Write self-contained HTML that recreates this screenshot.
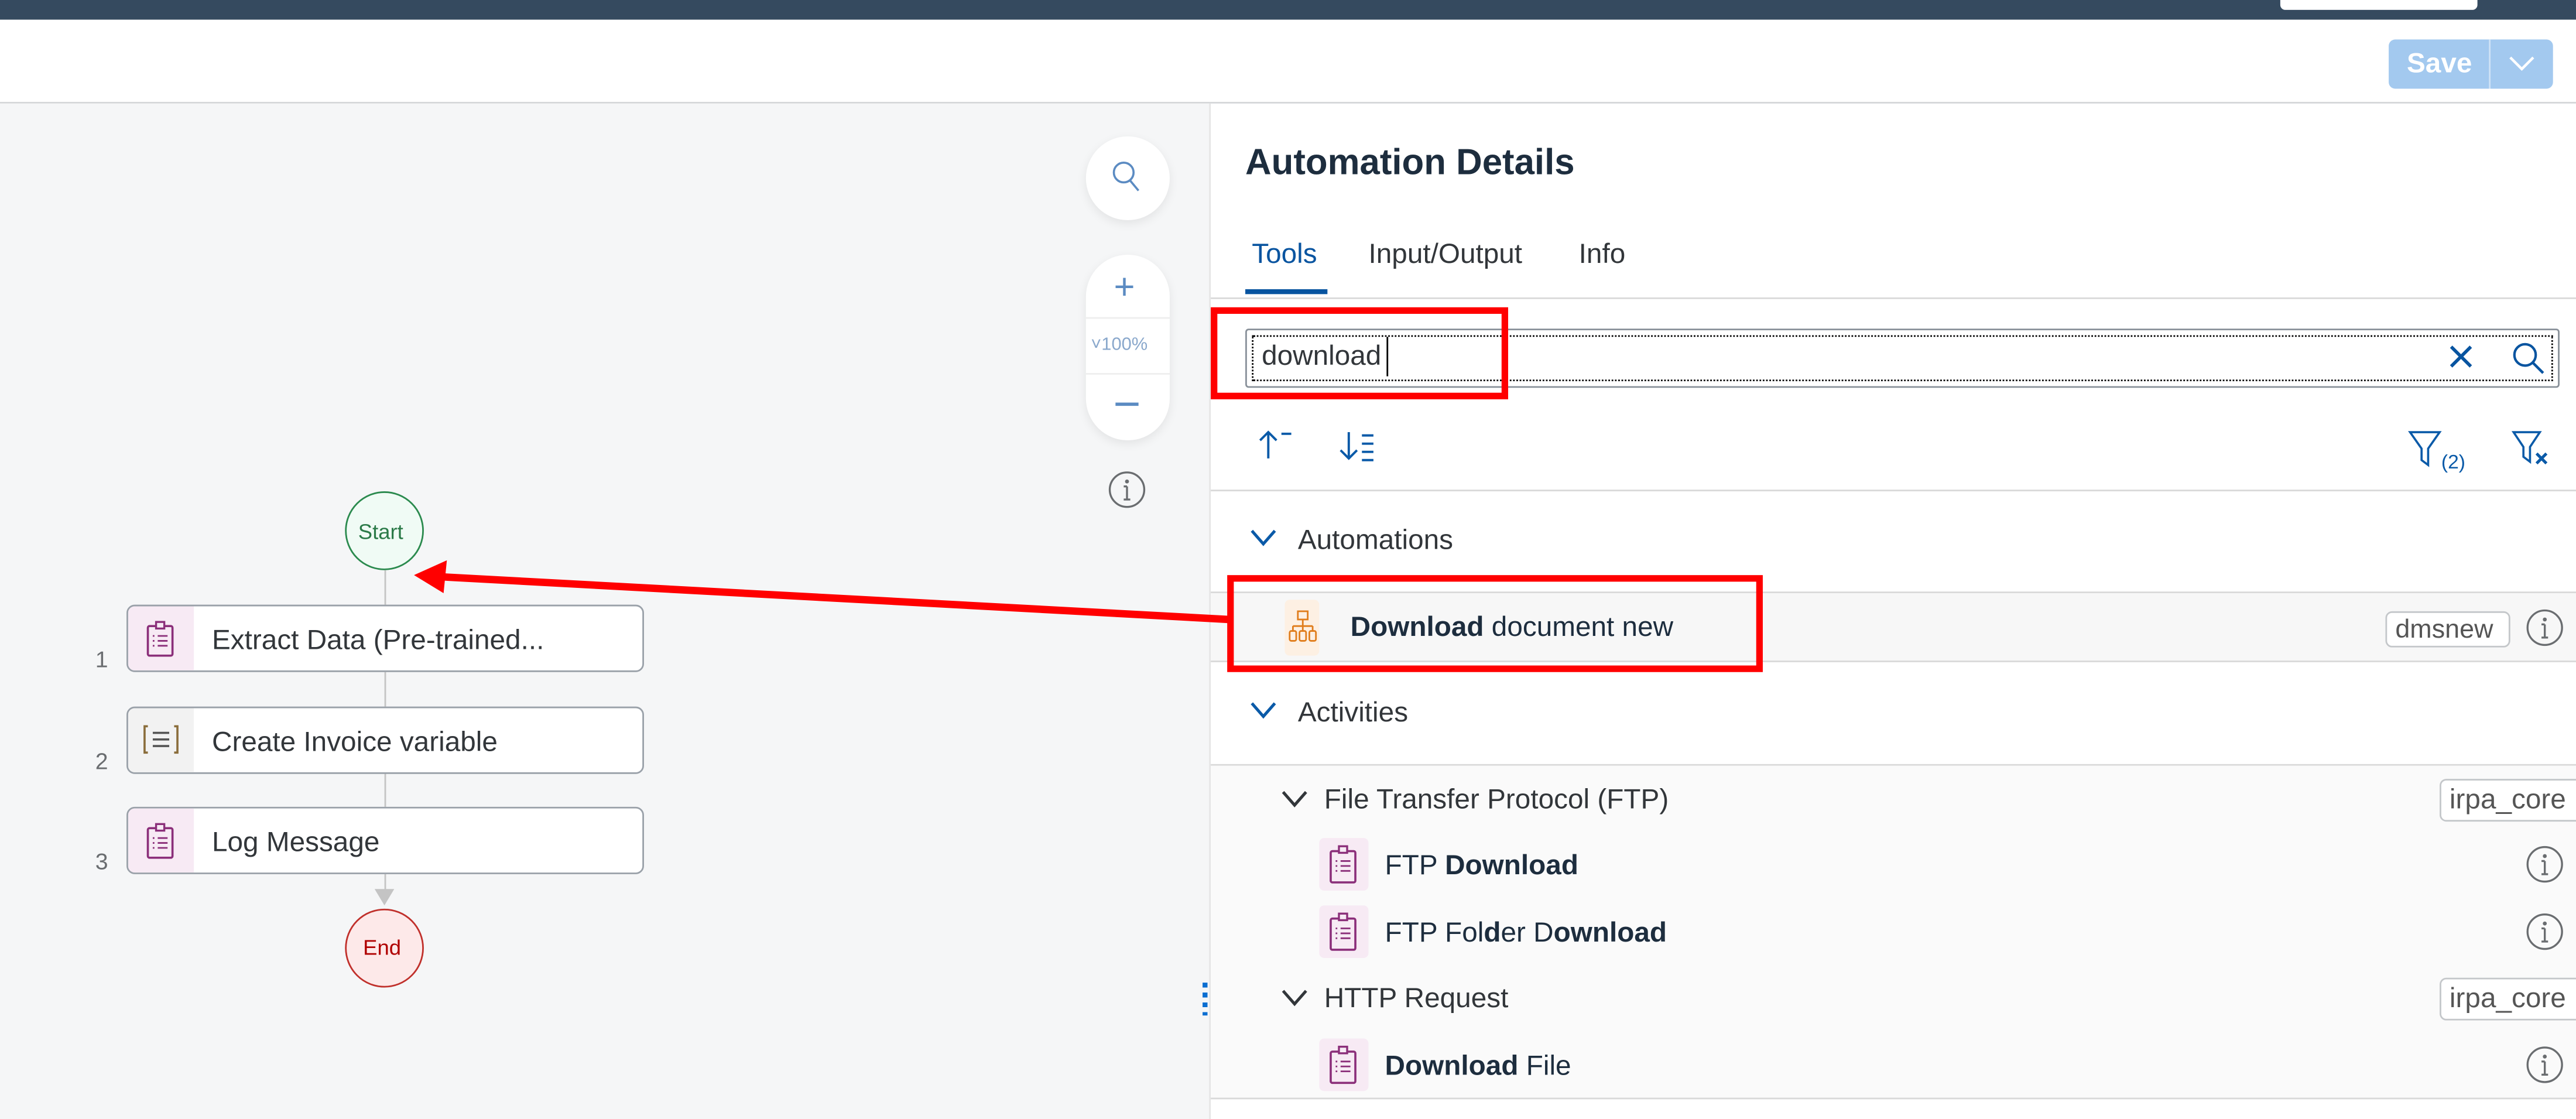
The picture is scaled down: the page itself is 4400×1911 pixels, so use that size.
<!DOCTYPE html>
<html><head><meta charset="utf-8"><style>
html,body{margin:0;padding:0;width:4400px;height:1911px;overflow:hidden;background:#fff}
#w{position:absolute;left:0;top:0;width:1568px;height:681px;transform:scale(2.80612,2.8062);transform-origin:0 0;font-family:"Liberation Sans",Arial,sans-serif;color:#32363a}
.a{position:absolute}
.t{position:absolute;white-space:nowrap;line-height:1}
.hr{position:absolute;height:1px;background:#d9d9d9}
.box{position:absolute;left:77px;width:313px;height:39px;border:1.5px solid #9aa1a9;border-radius:5px;background:#fff;overflow:hidden}
.box .ic{position:absolute;left:0;top:0;width:40px;height:100%;background:#f7eaf4}
.box .tx{position:absolute;left:51px;top:11px;font-size:17px;color:#32363a;white-space:nowrap}
.num{position:absolute;left:58px;font-size:14px;color:#6a6d70}
.tag{position:absolute;height:22px;border:1px solid #c4c7ca;border-radius:4px;background:#fff;font-size:16px;color:#555;line-height:22px;padding:0 5px;box-sizing:border-box}
.pk{position:absolute;width:30px;height:32px;background:#f7eaf4;border-radius:3px}
</style></head><body><div id="w">
<!-- top bar -->
<div class="a" style="left:0;top:0;width:1568px;height:12px;background:#354a5f"></div>
<div class="a" style="left:1388px;top:0;width:120px;height:6px;background:#fff;border-radius:0 0 3px 3px"></div>
<div class="a" style="left:0;top:12px;width:1568px;height:50px;background:#fff"></div>
<div class="hr" style="left:0;top:62px;width:1568px;background:#d5d7d9"></div>
<div class="a" style="left:1454px;top:24px;width:100px;height:30px;background:#a3c9ef;border-radius:4px"></div>
<div class="a" style="left:1515px;top:24px;width:1px;height:30px;background:#cfe2f6"></div>
<div class="t" style="left:1465px;top:30px;font-size:17px;font-weight:bold;color:#fff">Save</div>
<svg class="a" style="left:1525px;top:32px" width="20" height="14"><path d="M3 3 L10 10 L17 3" stroke="#fff" stroke-width="1.6" fill="none"/></svg>
<!-- canvas -->
<div class="a" style="left:0;top:63px;width:736px;height:618px;background:#f5f6f7"></div>
<div class="a" style="left:736px;top:63px;width:1px;height:618px;background:#e5e5e5"></div>
<div class="a" style="left:661px;top:83px;width:51px;height:51px;border-radius:50%;background:#fff;box-shadow:0 2px 6px rgba(0,0,0,.08)"></div>
<svg class="a" style="left:676px;top:97px" width="20" height="22"><circle cx="8" cy="8" r="6" stroke="#5b8bc2" stroke-width="1.3" fill="none"/><path d="M12 13 L17 19" stroke="#5b8bc2" stroke-width="1.3"/></svg>
<div class="a" style="left:661px;top:155px;width:51px;height:113px;border-radius:26px;background:#fff;box-shadow:0 2px 6px rgba(0,0,0,.08)"></div>
<div class="a" style="left:661px;top:193px;width:51px;height:1px;background:#eee"></div>
<div class="a" style="left:661px;top:227px;width:51px;height:1px;background:#eee"></div>
<div class="t" style="left:678px;top:164px;font-size:22px;color:#5b8bc2">+</div>
<div class="t" style="left:664px;top:205px;font-size:11px;color:#8aa8cc">˅100%</div>
<div class="a" style="left:679px;top:245px;width:14px;height:1.5px;background:#5b8bc2"></div>
<svg class="a" style="left:674px;top:286px" width="24" height="24"><circle cx="12" cy="12" r="10.5" stroke="#6a6d70" stroke-width="1.2" fill="none"/><circle cx="12" cy="7" r="1.2" fill="#6a6d70"/><path d="M12 10v8M10 18h4M10 10h2" stroke="#6a6d70" stroke-width="1.2" fill="none"/></svg>
<!-- flow -->
<div class="a" style="left:210px;top:299px;width:46px;height:46px;border:1.5px solid #2b8a4e;border-radius:50%;background:#f0fbf5"></div>
<div class="t" style="left:218px;top:317px;font-size:13px;color:#2b7a48">Start</div>
<div class="a" style="left:234px;top:347px;width:1px;height:21px;background:#c4c4c4"></div>
<div class="a" style="left:234px;top:409px;width:1px;height:21px;background:#c4c4c4"></div>
<div class="a" style="left:234px;top:470px;width:1px;height:21px;background:#c4c4c4"></div>
<div class="a" style="left:234px;top:532px;width:1px;height:10px;background:#c4c4c4"></div>
<svg class="a" style="left:228px;top:541px" width="12" height="12"><path d="M0 0 L12 0 L6 10Z" fill="#c4c4c4"/></svg>
<div class="box" style="top:368px"><div class="ic"></div><div class="tx">Extract Data (Pre-trained...</div></div>
<div class="box" style="top:430px"><div class="ic" style="background:#f2f2f2"></div><div class="tx">Create Invoice variable</div></div>
<div class="box" style="top:491px"><div class="ic"></div><div class="tx">Log Message</div></div>
<svg class="a" style="left:88px;top:377px" width="20" height="24"><rect x="2" y="4" width="15" height="18" rx="1" stroke="#8b2f7a" stroke-width="1.3" fill="none"/><rect x="7" y="1.5" width="5" height="4" stroke="#8b2f7a" stroke-width="1.2" fill="#f7eaf4"/><path d="M5 10h1M8 10h6M5 13h1M8 13h6M5 16h1M8 16h6" stroke="#8b2f7a" stroke-width="1"/></svg>
<svg class="a" style="left:88px;top:500px" width="20" height="24"><rect x="2" y="4" width="15" height="18" rx="1" stroke="#8b2f7a" stroke-width="1.3" fill="none"/><rect x="7" y="1.5" width="5" height="4" stroke="#8b2f7a" stroke-width="1.2" fill="#f7eaf4"/><path d="M5 10h1M8 10h6M5 13h1M8 13h6M5 16h1M8 16h6" stroke="#8b2f7a" stroke-width="1"/></svg>
<svg class="a" style="left:86px;top:440px" width="24" height="20"><path d="M4 2H2v16h2M20 2h2v16h-2" stroke="#8a6d3b" stroke-width="1.3" fill="none"/><path d="M7 6h10M7 10h10M7 14h10" stroke="#555" stroke-width="1.3"/></svg>
<div class="num" style="top:393px">1</div>
<div class="num" style="top:455px">2</div>
<div class="num" style="top:516px">3</div>
<div class="a" style="left:210px;top:553px;width:46px;height:46px;border:1.5px solid #c0302b;border-radius:50%;background:#fde9e9"></div>
<div class="t" style="left:221px;top:570px;font-size:13px;color:#b00000">End</div>
<div class="a" style="left:732px;top:598px;width:3px;height:20px;background:repeating-linear-gradient(#0a6ed1 0 3px,transparent 3px 6px)"></div>
<!-- right panel -->
<div class="t" style="left:758px;top:88px;font-size:22px;font-weight:bold;color:#1d2d3e">Automation Details</div>
<div class="t" style="left:762px;top:146px;font-size:17px;color:#0854a0">Tools</div>
<div class="t" style="left:833px;top:146px;font-size:17px;color:#32363a">Input/Output</div>
<div class="t" style="left:961px;top:146px;font-size:17px;color:#32363a">Info</div>
<div class="a" style="left:758px;top:176px;width:50px;height:3px;background:#0854a0"></div>
<div class="hr" style="left:737px;top:181px;width:831px"></div>
<div class="a" style="left:758px;top:200px;width:800px;height:36px;border:1px solid #89919a;border-radius:2px;box-sizing:border-box;background:#fff"></div>
<div class="a" style="left:762px;top:204px;width:792px;height:28px;border:1px dotted #000;box-sizing:border-box"></div>
<div class="t" style="left:768px;top:208px;font-size:17px;color:#32363a">download</div>
<div class="a" style="left:844px;top:205px;width:1px;height:24px;background:#000"></div>
<svg class="a" style="left:1490px;top:209px" width="16" height="16"><path d="M2 2L14 14M14 2L2 14" stroke="#0854a0" stroke-width="2"/></svg>
<svg class="a" style="left:1528px;top:207px" width="22" height="22"><circle cx="9" cy="9" r="6.5" stroke="#0854a0" stroke-width="1.5" fill="none"/><path d="M14 14l6 6" stroke="#0854a0" stroke-width="1.6"/></svg>
<!-- red box 1 -->
<div class="a" style="left:737px;top:187px;width:181px;height:56px;border:4px solid #f00;box-sizing:border-box"></div>
<!-- sort & filter -->
<svg class="a" style="left:764px;top:260px" width="28" height="22"><path d="M8 3v16M3 8l5-5 5 5" stroke="#0a5aa8" stroke-width="1.4" fill="none"/><path d="M16 4h6" stroke="#0a5aa8" stroke-width="1.4"/></svg>
<svg class="a" style="left:814px;top:260px" width="28" height="24"><path d="M7 3v16M2 14l5 5 5-5" stroke="#0a5aa8" stroke-width="1.4" fill="none"/><path d="M15 5h7M15 10h7M15 15h7M15 20h7" stroke="#0a5aa8" stroke-width="1.4"/></svg>
<svg class="a" style="left:1465px;top:260px" width="40" height="28"><path d="M2 3h18l-7 10v10l-4-3v-7Z" stroke="#0a5aa8" stroke-width="1.3" fill="none"/><text x="21" y="25" font-size="12" fill="#0a5aa8" font-family="Liberation Sans">(2)</text></svg>
<svg class="a" style="left:1528px;top:260px" width="28" height="26"><path d="M2 3h16l-6 9v9l-4-3v-6Z" stroke="#0a5aa8" stroke-width="1.3" fill="none"/><path d="M16 16l6 6M22 16l-6 6" stroke="#0a5aa8" stroke-width="1.8"/></svg>
<div class="hr" style="left:737px;top:298px;width:831px"></div>
<!-- Automations -->
<svg class="a" style="left:760px;top:320px" width="18" height="14"><path d="M2 3l7 8 7-8" stroke="#0a5aa8" stroke-width="1.8" fill="none"/></svg>
<div class="t" style="left:790px;top:320px;font-size:17px;color:#32363a">Automations</div>
<div class="hr" style="left:737px;top:360px;width:831px"></div>
<div class="a" style="left:737px;top:361px;width:831px;height:41px;background:#f7f7f7"></div>
<div class="a" style="left:782px;top:365px;width:21px;height:34px;background:#fdf0e3;border-radius:3px"></div>
<svg class="a" style="left:784px;top:370px" width="18" height="24"><rect x="6" y="2" width="6" height="5" stroke="#e07d1c" fill="none"/><path d="M9 7v4M3 11h12M3 11v3M9 11v3M15 11v3" stroke="#e07d1c" fill="none"/><rect x="1" y="14" width="4" height="6" rx="1" stroke="#e07d1c" fill="none"/><rect x="7" y="14" width="4" height="6" rx="1" stroke="#e07d1c" fill="none"/><rect x="13" y="14" width="4" height="6" rx="1" stroke="#e07d1c" fill="none"/></svg>
<div class="t" style="left:822px;top:373px;font-size:17px;color:#1d2d3e"><b>Download</b> document new</div>
<div class="tag" style="left:1452px;top:372px;width:76px">dmsnew</div>
<svg class="a" style="left:1537px;top:370px" width="24" height="24"><circle cx="12" cy="12" r="10.5" stroke="#6a6d70" stroke-width="1.2" fill="none"/><circle cx="12" cy="7" r="1.2" fill="#6a6d70"/><path d="M12 10v8M10 18h4M10 10h2" stroke="#6a6d70" stroke-width="1.2" fill="none"/></svg>
<div class="hr" style="left:737px;top:402px;width:831px"></div>
<!-- red box 2 -->
<div class="a" style="left:747px;top:350px;width:326px;height:59px;border:4px solid #f00;box-sizing:border-box"></div>
<!-- arrow -->
<svg class="a" style="left:240px;top:335px" width="520" height="50"><path d="M508 42 L28 16" stroke="#f00" stroke-width="4.5"/><path d="M12 15 L32 6 L30 26Z" fill="#f00"/></svg>
<!-- Activities -->
<svg class="a" style="left:760px;top:425px" width="18" height="14"><path d="M2 3l7 8 7-8" stroke="#0a5aa8" stroke-width="1.8" fill="none"/></svg>
<div class="t" style="left:790px;top:425px;font-size:17px;color:#32363a">Activities</div>
<div class="hr" style="left:737px;top:465px;width:831px"></div>
<div class="a" style="left:737px;top:466px;width:831px;height:202px;background:#fafafa"></div>
<div class="hr" style="left:737px;top:668px;width:831px"></div>
<svg class="a" style="left:779px;top:479px" width="18" height="14"><path d="M2 3l7 8 7-8" stroke="#32363a" stroke-width="1.8" fill="none"/></svg>
<div class="t" style="left:806px;top:478px;font-size:17px;color:#32363a">File Transfer Protocol (FTP)</div>
<div class="tag" style="left:1485px;top:474px;width:90px;height:26px;line-height:24px;font-size:17px">irpa_core</div>
<svg class="a" style="left:779px;top:600px" width="18" height="14"><path d="M2 3l7 8 7-8" stroke="#32363a" stroke-width="1.8" fill="none"/></svg>
<div class="t" style="left:806px;top:599px;font-size:17px;color:#32363a">HTTP Request</div>
<div class="tag" style="left:1485px;top:595px;width:90px;height:26px;line-height:24px;font-size:17px">irpa_core</div>
<div class="pk" style="left:803px;top:510px"></div>
<div class="pk" style="left:803px;top:551px"></div>
<div class="pk" style="left:803px;top:632px"></div>
<svg class="a" style="left:808px;top:513px" width="20" height="26"><rect x="2" y="5" width="15" height="19" rx="1" stroke="#8b2f7a" stroke-width="1.3" fill="none"/><rect x="7" y="2" width="5" height="4" stroke="#8b2f7a" stroke-width="1.2" fill="#f7eaf4"/><path d="M5 11h1M8 11h6M5 14h1M8 14h6M5 17h1M8 17h6" stroke="#8b2f7a" stroke-width="1"/></svg>
<svg class="a" style="left:808px;top:554px" width="20" height="26"><rect x="2" y="5" width="15" height="19" rx="1" stroke="#8b2f7a" stroke-width="1.3" fill="none"/><rect x="7" y="2" width="5" height="4" stroke="#8b2f7a" stroke-width="1.2" fill="#f7eaf4"/><path d="M5 11h1M8 11h6M5 14h1M8 14h6M5 17h1M8 17h6" stroke="#8b2f7a" stroke-width="1"/></svg>
<svg class="a" style="left:808px;top:635px" width="20" height="26"><rect x="2" y="5" width="15" height="19" rx="1" stroke="#8b2f7a" stroke-width="1.3" fill="none"/><rect x="7" y="2" width="5" height="4" stroke="#8b2f7a" stroke-width="1.2" fill="#f7eaf4"/><path d="M5 11h1M8 11h6M5 14h1M8 14h6M5 17h1M8 17h6" stroke="#8b2f7a" stroke-width="1"/></svg>
<div class="t" style="left:843px;top:518px;font-size:17px;color:#1d2d3e">FTP <b>Download</b></div>
<div class="t" style="left:843px;top:559px;font-size:17px;color:#1d2d3e">FTP Fol<b>d</b>er D<b>ownload</b></div>
<div class="t" style="left:843px;top:640px;font-size:17px;color:#1d2d3e"><b>Download</b> File</div>
<svg class="a" style="left:1537px;top:514px" width="24" height="24"><circle cx="12" cy="12" r="10.5" stroke="#6a6d70" stroke-width="1.2" fill="none"/><circle cx="12" cy="7" r="1.2" fill="#6a6d70"/><path d="M12 10v8M10 18h4M10 10h2" stroke="#6a6d70" stroke-width="1.2" fill="none"/></svg>
<svg class="a" style="left:1537px;top:555px" width="24" height="24"><circle cx="12" cy="12" r="10.5" stroke="#6a6d70" stroke-width="1.2" fill="none"/><circle cx="12" cy="7" r="1.2" fill="#6a6d70"/><path d="M12 10v8M10 18h4M10 10h2" stroke="#6a6d70" stroke-width="1.2" fill="none"/></svg>
<svg class="a" style="left:1537px;top:636px" width="24" height="24"><circle cx="12" cy="12" r="10.5" stroke="#6a6d70" stroke-width="1.2" fill="none"/><circle cx="12" cy="7" r="1.2" fill="#6a6d70"/><path d="M12 10v8M10 18h4M10 10h2" stroke="#6a6d70" stroke-width="1.2" fill="none"/></svg>
</div></body></html>
